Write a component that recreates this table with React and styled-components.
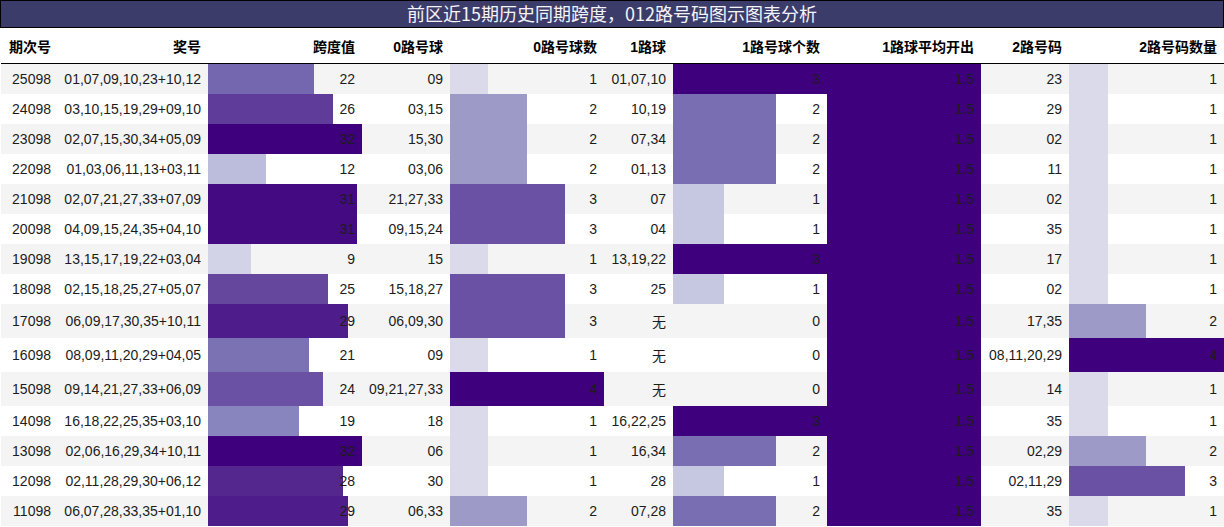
import React from "react"
import styled, { createGlobalStyle } from "styled-components"

const GlobalStyle = createGlobalStyle`
  html, body {
    margin: 0;
    padding: 0;
    background: #fff;
  }
  body {
    font-family: "Liberation Sans", "Noto Sans CJK SC", sans-serif;
    font-size: 14px;
    color: #1c1c1c;
  }
`

// d3 Purples scheme, linear ramp between the nine stops
const purples = ["#fcfbfd", "#efedf5", "#dadaeb", "#bcbddc", "#9e9ac8", "#807dba", "#6a51a3", "#54278f", "#3f007d"]

const hexToRgb = (hex) => [1, 3, 5].map(i => parseInt(hex.slice(i, i + 2), 16))

const purple = (t) => {
  const x = Math.max(0, Math.min(1, t)) * (purples.length - 1)
  const i = Math.min(Math.floor(x), purples.length - 2)
  const f = x - i
  const a = hexToRgb(purples[i])
  const b = hexToRgb(purples[i + 1])
  const c = a.map((v, k) => Math.round(v + (b[k] - v) * f))
  return `rgb(${c.join(",")})`
}

const rows = [
  ["25098", "01,07,09,10,23+10,12", 22, "09", 1, "01,07,10", 3, 1.5, "23", 1],
  ["24098", "03,10,15,19,29+09,10", 26, "03,15", 2, "10,19", 2, 1.5, "29", 1],
  ["23098", "02,07,15,30,34+05,09", 32, "15,30", 2, "07,34", 2, 1.5, "02", 1],
  ["22098", "01,03,06,11,13+03,11", 12, "03,06", 2, "01,13", 2, 1.5, "11", 1],
  ["21098", "02,07,21,27,33+07,09", 31, "21,27,33", 3, "07", 1, 1.5, "02", 1],
  ["20098", "04,09,15,24,35+04,10", 31, "09,15,24", 3, "04", 1, 1.5, "35", 1],
  ["19098", "13,15,17,19,22+03,04", 9, "15", 1, "13,19,22", 3, 1.5, "17", 1],
  ["18098", "02,15,18,25,27+05,07", 25, "15,18,27", 3, "25", 1, 1.5, "02", 1],
  ["17098", "06,09,17,30,35+10,11", 29, "06,09,30", 3, "无", 0, 1.5, "17,35", 2],
  ["16098", "08,09,11,20,29+04,05", 21, "09", 1, "无", 0, 1.5, "08,11,20,29", 4],
  ["15098", "09,14,21,27,33+06,09", 24, "09,21,27,33", 4, "无", 0, 1.5, "14", 1],
  ["14098", "16,18,22,25,35+03,10", 19, "18", 1, "16,22,25", 3, 1.5, "35", 1],
  ["13098", "02,06,16,29,34+10,11", 32, "06", 1, "16,34", 2, 1.5, "02,29", 2],
  ["12098", "02,11,28,29,30+06,12", 28, "30", 1, "28", 1, 1.5, "02,11,29", 3],
  ["11098", "06,07,28,33,35+01,10", 29, "06,33", 2, "07,28", 2, 1.5, "35", 1]
]

const columns = [
  { title: "期次号", width: 57 },
  { title: "奖号", width: 150 },
  { title: "跨度值", width: 154, bar: true },
  { title: "0路号球", width: 88 },
  { title: "0路号球数", width: 154, bar: true },
  { title: "1路球", width: 69 },
  { title: "1路号球个数", width: 154, bar: true },
  { title: "1路球平均开出", width: 154, bar: true },
  { title: "2路号码", width: 88 },
  { title: "2路号码数量", width: 155, bar: true }
]

const maxOf = (idx) => Math.max(...rows.map(r => r[idx]))
const barMax = columns.map((c, i) => (c.bar ? maxOf(i) : 0))

const App = () => {
  return (
    <Page>
      <GlobalStyle />
      <TitleBar>前区近15期历史同期跨度，012路号码图示图表分析</TitleBar>
      <Table>
        <colgroup>
          {columns.map(c => <col key={c.title} style={{ width: c.width }} />)}
        </colgroup>
        <thead>
          <tr>
            {columns.map(c => <HeadCell key={c.title}>{c.title}</HeadCell>)}
          </tr>
        </thead>
        <tbody>
          {rows.map((r, ri) => (
            <Row key={r[0]} $striped={ri % 2 === 0} $tall={r[5] === "无"}>
              {r.map((v, ci) => {
                if (!columns[ci].bar) return <Cell key={ci}>{v}</Cell>
                const t = v / barMax[ci]
                return (
                  <BarCell key={ci} $pct={t * 100} $color={purple(t)}>
                    {v}
                  </BarCell>
                )
              })}
            </Row>
          ))}
        </tbody>
      </Table>
    </Page>
  )
}

const Page = styled.div`
  width: 1224px;
`

const TitleBar = styled.div`
  height: 26px;
  border: 1px solid #000;
  background: #3c3c6b;
  color: #f4f4f8;
  font-family: "Noto Sans CJK SC", sans-serif;
  font-size: 18px;
  line-height: 25px;
  text-align: center;
`

const Table = styled.table`
  table-layout: fixed;
  width: 1223px;
  margin-left: 1px;
  border-collapse: separate;
  border-spacing: 0;
`

const HeadCell = styled.th`
  height: 35px;
  padding: 0 7px 0 0;
  border-bottom: 1px solid #000;
  font-weight: bold;
  font-size: 14px;
  color: #000;
  text-align: right;
  white-space: nowrap;
`

const Row = styled.tr`
  background: ${p => (p.$striped ? "#f4f4f4" : "#fff")};
  td {
    height: ${p => (p.$tall ? "34px" : "30px")};
  }
`

const Cell = styled.td`
  padding: 0 7px 0 0;
  text-align: right;
  white-space: nowrap;
  vertical-align: middle;
`

const BarCell = styled(Cell)`
  background-image: linear-gradient(
    to right,
    ${p => p.$color} 0,
    ${p => p.$color} ${p => p.$pct}%,
    transparent ${p => p.$pct}%
  );
`

export default App
